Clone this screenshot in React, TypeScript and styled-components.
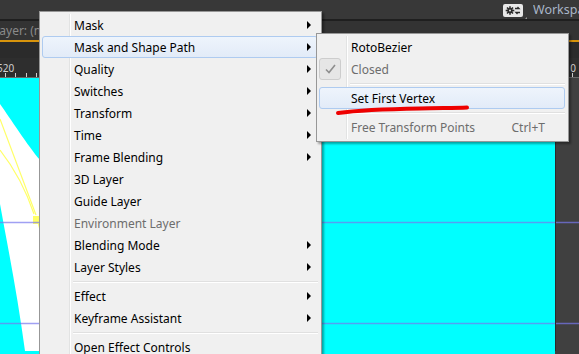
import styled, { createGlobalStyle } from "styled-components";

const GlobalStyle = createGlobalStyle`
    html, body {
        margin: 0;
        padding: 0;
        background: #2c2c2c;
    }
    * {
        box-sizing: border-box;
    }
`;

const Page = styled.div`
    position: relative;
    width: 579px;
    height: 354px;
    overflow: hidden;
    display: flex;
    flex-direction: column;
    background: #2c2c2c;
    font-family: "Noto Sans", "Liberation Sans", sans-serif;
`;

const TopBar = styled.div`
    height: 21px;
    flex: none;
    display: flex;
    align-items: center;
    justify-content: flex-end;
    gap: 10px;
    background: #383838;
    border-bottom: 2px solid #1f1f1f;
    overflow: hidden;
`;

const WorkspaceButton = styled.div`
    position: relative;
    width: 20px;
    height: 13px;
    margin-top: 1px;
    border-radius: 2px;
    background: #e8e8e8;
    display: flex;
    align-items: center;
    justify-content: center;

    &::after {
        content: "";
        position: absolute;
        right: -4px;
        bottom: -3px;
        border-left: 3px solid transparent;
        border-bottom: 3px solid #9a9a9a;
    }
`;

const WorkspaceLabel = styled.span`
    width: 46px;
    white-space: nowrap;
    overflow: hidden;
    color: #a9b6c8;
    font-size: 12.5px;
    line-height: 21px;
`;

const PanelHeader = styled.div`
    height: 21px;
    flex: none;
    background: #333333;
    border-bottom: 2px solid #d8940c;
    display: flex;
    align-items: center;
    overflow: hidden;
`;

const PanelTitle = styled.span`
    margin-left: -7px;
    color: #8a8a8a;
    font-size: 12px;
    white-space: nowrap;
`;

const DarkStrip = styled.div`
    height: 16px;
    flex: none;
    background: #2b2b2b;
`;

const Ruler = styled.div`
    position: relative;
    height: 20px;
    flex: none;
    background:
        repeating-linear-gradient(90deg, transparent 0 5px, #cfcfcf 5px 6px, transparent 6px 10.3px)
            bottom left / 100% 4px no-repeat,
        #2e2e2e;
    border-bottom: 1px solid #6a6a6a;
    display: flex;
    justify-content: space-between;
    align-items: flex-start;
    color: #d0d0d0;
    font-size: 10px;
    line-height: 12px;
    padding-top: 4px;
`;

const RulerNumber = styled.span<{ $edge: "left" | "right" }>`
    margin-left: ${({ $edge }) => ($edge === "left" ? "-3px" : "0")};
    margin-right: ${({ $edge }) => ($edge === "right" ? "3px" : "0")};
`;

const Viewport = styled.div`
    position: relative;
    flex: 1;
    display: flex;
`;

const Comp = styled.div`
    width: 555px;
    flex: none;
    background: #00ffff;
`;

const SideGutter = styled.div`
    flex: 1;
    background: #404040;
`;

const ViewportArt = styled.svg`
    position: absolute;
    inset: 0;
`;

const Menu = styled.div<{ $left: number; $top: number; $width: number }>`
    position: absolute;
    left: ${({ $left }) => $left}px;
    top: ${({ $top }) => $top}px;
    width: ${({ $width }) => $width}px;
    padding: 2px 3px 3px 2px;
    background: #f0f0f0;
    border: 1px solid #979797;
    box-shadow: 2px 2px 2px rgba(0, 0, 0, 0.35);
    font-family: "Noto Sans", "Liberation Sans", sans-serif;
    font-size: 12px;
    color: #000;

    &::before {
        content: "";
        position: absolute;
        left: 29px;
        top: 2px;
        bottom: 2px;
        width: 1px;
        background: #e2e3e3;
        box-shadow: 1px 0 0 #ffffff;
    }
`;

const MenuItem = styled.div<{ $active?: boolean; $disabled?: boolean }>`
    position: relative;
    height: 22px;
    display: flex;
    align-items: center;
    padding: 0 6px 0 31px;
    border: 1px solid ${({ $active }) => ($active ? "#aecbf0" : "transparent")};
    border-radius: 3px;
    background: ${({ $active }) =>
        $active ? "linear-gradient(#eef4fc, #e2ebf8)" : "transparent"};
    color: ${({ $disabled }) => ($disabled ? "#6d6d6d" : "#000")};
    white-space: nowrap;
`;

const ItemLabel = styled.span`
    flex: 1;
`;

const Shortcut = styled.span`
    margin-right: 13px;
`;

const SubArrow = styled.span`
    width: 0;
    height: 0;
    border-top: 4px solid transparent;
    border-bottom: 4px solid transparent;
    border-left: 4px solid #000;
`;

const CheckBox = styled.span`
    position: absolute;
    left: -1px;
    top: -1px;
    width: 22px;
    height: 22px;
    border: 1px solid #cdcdcd;
    border-radius: 3px;
    background: #e6e6e6;
    display: flex;
    align-items: center;
    justify-content: center;
`;

const Separator = styled.div`
    height: 7px;
    margin-left: 31px;
    display: flex;
    align-items: center;

    &::after {
        content: "";
        flex: 1;
        height: 1px;
        background: #e0e0e0;
        box-shadow: 0 1px 0 #ffffff;
    }
`;

const Annotation = styled.svg`
    position: absolute;
    left: 330px;
    top: 100px;
`;

type Entry = { label: string; sub?: boolean; disabled?: boolean; active?: boolean } | "sep";

const layerMenu: Entry[] = [
    { label: "Mask", sub: true },
    { label: "Mask and Shape Path", sub: true, active: true },
    { label: "Quality", sub: true },
    { label: "Switches", sub: true },
    { label: "Transform", sub: true },
    { label: "Time", sub: true },
    { label: "Frame Blending", sub: true },
    { label: "3D Layer" },
    { label: "Guide Layer" },
    { label: "Environment Layer", disabled: true },
    { label: "Blending Mode", sub: true },
    { label: "Layer Styles", sub: true },
    "sep",
    { label: "Effect", sub: true },
    { label: "Keyframe Assistant", sub: true },
    "sep",
    { label: "Open Effect Controls" },
];

const WorkspaceIcon = () => (
    <svg width="16" height="11" viewBox="0 0 16 11">
        <circle cx="5" cy="5.5" r="2.6" fill="#2a2a2a" />
        <g stroke="#2a2a2a" strokeWidth="1.6">
            <line x1="5" y1="1.2" x2="5" y2="9.8" />
            <line x1="0.7" y1="5.5" x2="9.3" y2="5.5" />
            <line x1="2" y1="2.5" x2="8" y2="8.5" />
            <line x1="8" y1="2.5" x2="2" y2="8.5" />
        </g>
        <circle cx="5" cy="5.5" r="1" fill="#e8e8e8" />
        <path d="M10 3.5h4l-1.5-1.5M15 7.5h-4l1.5 1.5" stroke="#2a2a2a" strokeWidth="1.3" fill="none" />
    </svg>
);

const App = () => {
    return (
        <>
            <GlobalStyle />
            <Page>
                <TopBar>
                    <WorkspaceButton>
                        <WorkspaceIcon />
                    </WorkspaceButton>
                    <WorkspaceLabel>Workspace</WorkspaceLabel>
                </TopBar>
                <PanelHeader>
                    <PanelTitle>Layer: (none)</PanelTitle>
                </PanelHeader>
                <DarkStrip />
                <Ruler>
                    <RulerNumber $edge="left">520</RulerNumber>
                    <RulerNumber $edge="right">0</RulerNumber>
                </Ruler>
                <Viewport>
                    <Comp />
                    <SideGutter />
                    <ViewportArt width="579" height="273" viewBox="0 0 579 273">
                        <path d="M0 26 C10 40 28 68 40 82 L46 90 L46 273 L25 273 C18 220 8 170 0 126 Z" fill="#ffffff" />
                        <g stroke="#ffff66" strokeWidth="1.2" fill="none">
                            <line x1="0" y1="41" x2="36" y2="137" />
                            <path d="M0 72 Q22 100 34 136" />
                            <line x1="37" y1="140" x2="41" y2="156" />
                        </g>
                        <rect x="33" y="138" width="6" height="8" fill="#ffff66" />
                        <g stroke="#7878ee" strokeOpacity="0.7" strokeWidth="1.5">
                            <line x1="0" y1="144.5" x2="579" y2="144.5" />
                            <line x1="0" y1="245.5" x2="579" y2="245.5" />
                        </g>
                        <line x1="555.5" y1="0" x2="555.5" y2="273" stroke="#2a2a2a" />
                    </ViewportArt>
                </Viewport>

                <Menu $left={39} $top={11} $width={283}>
                    {layerMenu.map((entry, i) =>
                        entry === "sep" ? (
                            <Separator key={i} />
                        ) : (
                            <MenuItem key={i} $active={entry.active} $disabled={entry.disabled}>
                                <ItemLabel>{entry.label}</ItemLabel>
                                {entry.sub && <SubArrow />}
                            </MenuItem>
                        )
                    )}
                </Menu>

                <Menu $left={316} $top={33} $width={253}>
                    <MenuItem>
                        <ItemLabel>RotoBezier</ItemLabel>
                    </MenuItem>
                    <MenuItem $disabled>
                        <CheckBox>
                            <svg width="11" height="10" viewBox="0 0 11 10">
                                <path d="M1 5.5 L4 8.5 L10 1" stroke="#8e8e8e" strokeWidth="1.6" fill="none" />
                            </svg>
                        </CheckBox>
                        <ItemLabel>Closed</ItemLabel>
                    </MenuItem>
                    <Separator />
                    <MenuItem $active>
                        <ItemLabel>Set First Vertex</ItemLabel>
                    </MenuItem>
                    <Separator />
                    <MenuItem $disabled>
                        <ItemLabel>Free Transform Points</ItemLabel>
                        <Shortcut>Ctrl+T</Shortcut>
                    </MenuItem>
                </Menu>

                <Annotation width="150" height="20" viewBox="0 0 150 20">
                    <path
                        d="M8 13 C30 10 60 9 90 8.5 C110 8 125 8 137 7.5"
                        stroke="#ee0000"
                        strokeWidth="4"
                        strokeLinecap="round"
                        fill="none"
                    />
                </Annotation>
            </Page>
        </>
    );
};

export default App;
